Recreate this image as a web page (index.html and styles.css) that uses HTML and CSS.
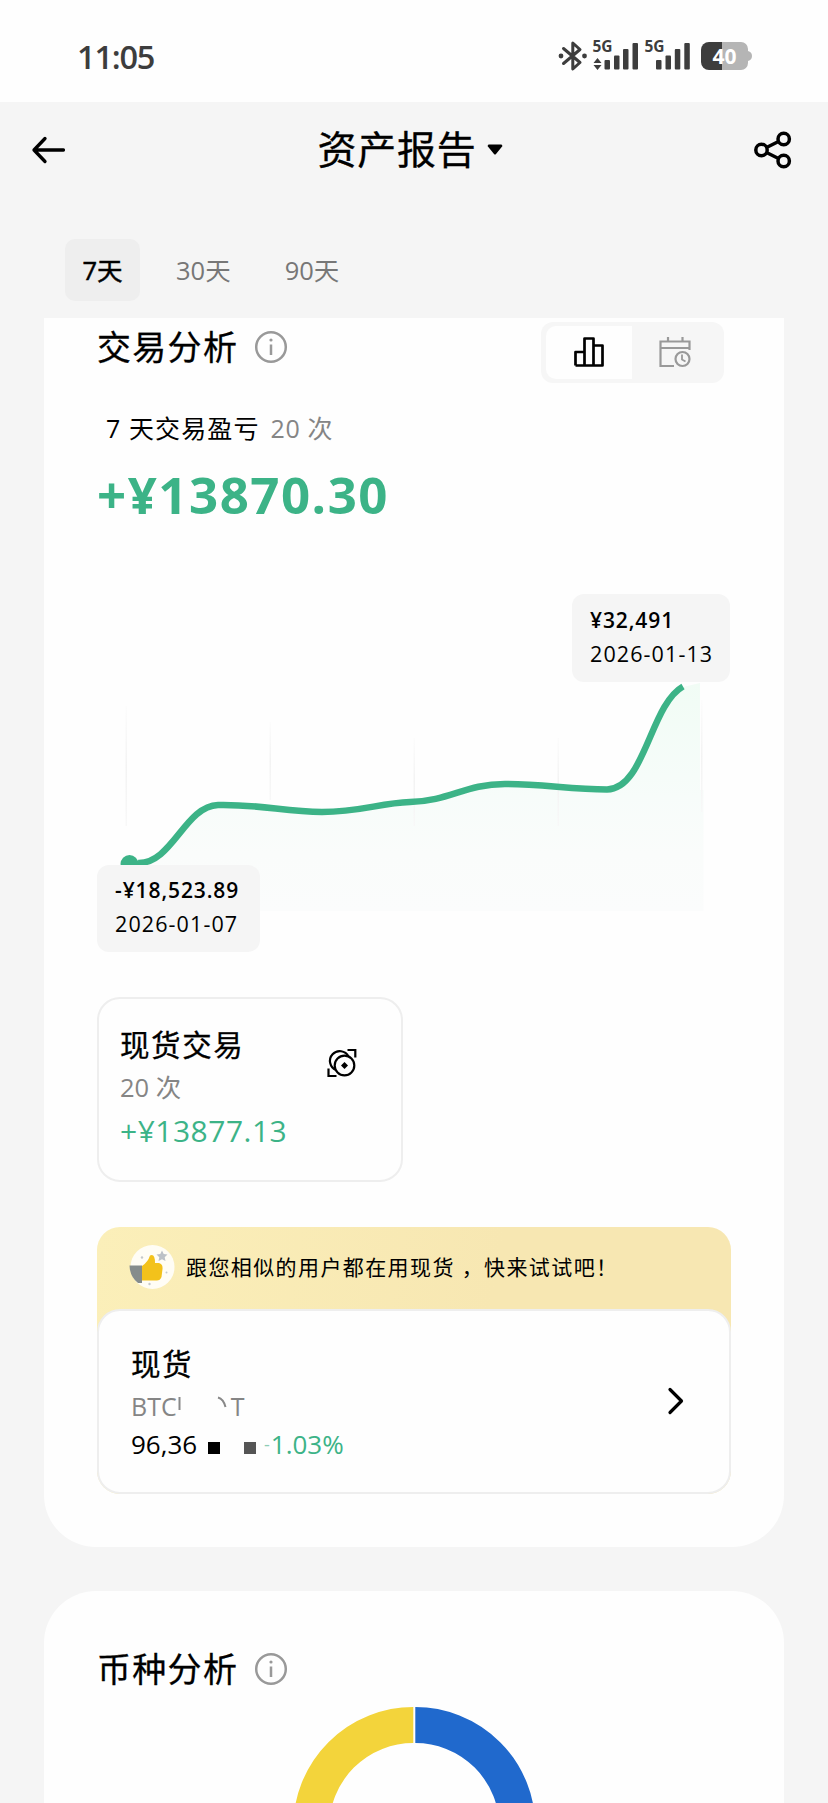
FILE: index.html
```html
<!DOCTYPE html>
<html lang="zh-CN">
<head>
<meta charset="utf-8">
<title>资产报告</title>
<link rel="stylesheet" href="styles.css">
</head>
<body>
<div class="status">
  <span class="clock">11:05</span>
  <svg class="status-icons" width="200" height="52" viewBox="0 -8 200 52">
    <path d="M11.500 10.500 L28 24.500 L20.800 31 V5 L28 11.500 L11.500 25.500" fill="none" stroke="#3d3d3d" stroke-width="3" stroke-linejoin="round" stroke-linecap="round"/>
    <g fill="#3d3d3d">
      <circle cx="9" cy="18" r="2.400"/><circle cx="32.500" cy="18" r="2.400"/>
      <text x="40.500" y="13.500" class="gen">5G</text>
      <path d="M45.500 20 L49.500 25 H41.500Z M45.500 32 L49.500 27 H41.500Z"/>
      <rect x="52.500" y="22" width="5.500" height="9.500" rx="1"/><rect x="62" y="17.500" width="5.500" height="14" rx="1"/><rect x="71" y="11" width="5.500" height="20.500" rx="1"/><rect x="80.500" y="5" width="5.500" height="26.500" rx="1"/>
      <text x="92.500" y="13.500" class="gen">5G</text>
      <rect x="104" y="22" width="5.500" height="9.500" rx="1"/><rect x="113.500" y="17.500" width="5.500" height="14" rx="1"/><rect x="122.800" y="11" width="5.500" height="20.500" rx="1"/><rect x="132.300" y="5" width="5.500" height="26.500" rx="1"/>
    </g>
    <path d="M157 4 H189 A7 7 0 0 1 196 11 V13 Q200 14 200 18 Q200 22 196 23 V25 A7 7 0 0 1 189 32 H157 Z" fill="#b5b5b5"/>
    <path d="M170 4 H157 A8 8 0 0 0 149 12 V24 A8 8 0 0 0 157 32 H170 Z" fill="#3d3d3d"/>
    <text x="172.500" y="25.500" class="charge">40</text>
  </svg>
</div>

<header class="topbar">
  <svg width="36" height="30" viewBox="0 0 36 30"><path d="M15 3.500 L4 15 L15 26.500 M4 15 H33.500" fill="none" stroke="#000" stroke-width="3.300" stroke-linecap="round" stroke-linejoin="round"/></svg>
  <div class="title"><span>资产报告</span><svg width="16" height="11" viewBox="0 0 16 11"><path d="M1.500 .5 H14.500 L15.500 2 L9 10 Q8 11 7 10 L.5 2Z"/></svg></div>
  <svg width="38" height="38" viewBox="0 0 38 38" fill="none" stroke="#000" stroke-width="3.500"><circle cx="7.500" cy="19" r="5.700"/><circle cx="29.700" cy="8" r="5.700"/><circle cx="29.700" cy="30" r="5.700"/><path d="M12.500 16.500 L24.500 10.500 M12.500 21.500 L24.500 27.500"/></svg>
</header>

<nav class="tabs">
  <span class="tab tab-on">7天</span>
  <span class="tab tab-30">30天</span>
  <span class="tab">90天</span>
</nav>

<section class="card trade">
  <div class="head">
    <h2>交易分析</h2>
    <svg class="info" width="34" height="34" viewBox="0 0 34 34"><circle cx="17" cy="17" r="14.800" fill="none" stroke="#999" stroke-width="2.500"/><circle cx="17" cy="10" r="1.600" fill="#999"/><path d="M17 14.500 V25" stroke="#999" stroke-width="2.500"/></svg>
    <div class="switch">
      <span class="switch-on"><svg width="32" height="32" viewBox="0 0 32 32" fill="none" stroke="#000" stroke-width="2.700" stroke-linejoin="round"><path d="M2.500 29.500 V16 H11.500 M11.500 29.500 V2.500 H20.500 V29.500 M20.500 9.500 H29.500 V29.500 H2.500"/></svg></span>
      <span class="switch-off"><svg width="34" height="32" viewBox="0 0 34 32" fill="none" stroke="#999" stroke-width="2.200"><path d="M31.500 14 V5.500 H2.500 V30 H16 M2.500 12 H31.500 M10 5.500 V1 M24.500 5.500 V1"/><circle cx="24.500" cy="23" r="7"/><path d="M24 18.500 V23.500 L27.500 25.500" stroke-width="1.800"/></svg></span>
    </div>
  </div>
  <div class="sub"><span>7 天交易盈亏</span><span class="muted">20 次</span></div>
  <div class="amount">+¥13870.30</div>

  <div class="chart">
    <svg width="634" height="370" viewBox="97 590 634 370">
      <defs>
        <linearGradient id="area" x1="0" y1="0" x2="0" y2="1"><stop offset="0" stop-color="#f1fcf5"/><stop offset=".5" stop-color="#f7fcfa"/><stop offset=".75" stop-color="#fafcfb"/><stop offset="1" stop-color="#fbfcfc"/></linearGradient>
        <linearGradient id="rule" x1="0" y1="0" x2="0" y2="1"><stop offset="0" stop-color="#fcfcfc"/><stop offset=".5" stop-color="#f3f3f3"/><stop offset="1" stop-color="#f8f8f8"/></linearGradient>
      </defs>
      <path d="M142 863 C172 864 185 806 218 805 C260 804 285 812 322 812 C360 812 380 803 410 802 C450 801 465 784 505 784 C540 784 570 789 607 789.500 C645 789 650 705 683 687 L700 683 V790 H703.500 V911 H142Z" fill="url(#area)"/>
      <g fill="url(#rule)"><rect x="125.500" y="706" width="1.500" height="120"/><rect x="269.500" y="722" width="1.500" height="78"/><rect x="413.500" y="738" width="1.500" height="88"/><rect x="557.500" y="738" width="1.500" height="88"/><rect x="701" y="700" width="1.500" height="112"/></g>
      <path d="M138 863 C172 864 185 806 218 805 C260 804 285 812 322 812 C360 812 380 803 410 802 C450 801 465 784 505 784 C540 784 570 789 607 789.500 C645 789 650 705 683 686.500" fill="none" stroke="#3cb387" stroke-width="6.500"/>
      <circle cx="129.500" cy="864" r="9" fill="#3cb387"/>
    </svg>
    <div class="tip tip-high"><b>¥32,491</b><span>2026-01-13</span></div>
    <div class="tip tip-low"><b>-¥18,523.89</b><span>2026-01-07</span></div>
  </div>

  <div class="spot">
    <div>
      <h3>现货交易</h3>
      <p class="muted count">20 次</p>
      <p class="gain">+¥13877.13</p>
    </div>
    <svg width="30" height="30" viewBox="0 0 30 30" fill="none" stroke="#000" stroke-width="2.200"><path d="M20.500 2 H28.300 V9.500 M1.500 20.500 V28 H9.500"/><circle cx="17.500" cy="17.500" r="9.800"/><path d="M9 22 A9.800 9.800 0 1 1 21.500 8.500"/><path d="M17.500 14 L21 17.500 L17.500 21 L14 17.500Z" fill="#000" stroke="none"/></svg>
  </div>

  <div class="promo">
    <div class="promo-top">
      <svg width="46" height="46" viewBox="0 0 46 46"><circle cx="23.500" cy="23" r="22" fill="#fffdf5"/><path d="M.5 21.500 H13 V39 H9 Q1 33 .5 21.500Z" fill="#858c8c"/><path d="M13 22 Q19 18 21 11.500 Q26 9 26 19 H30 Q34 20 33.500 25 L32.500 33 Q31 37 27 36.500 H13Z" fill="#f3c21b"/><path d="M33 6.500 L34.700 10 L38.500 10.500 L35.700 13.200 L36.500 17 L33 15.200 L29.500 17 L30.300 13.200 L27.500 10.500 L31.300 10Z" fill="#bcc1c7"/><g fill="#c5c9cb"><circle cx="13" cy="13.500" r="1.200"/><circle cx="37.500" cy="28.500" r="1"/><circle cx="20.500" cy="40" r="1.200"/></g></svg>
      <span>跟您相似的用户都在用现货 ，快来试试吧！</span>
    </div>
    <div class="pair">
      <div>
        <h3>现货</h3>
        <p class="muted symbol"><span>BTC</span><svg width="54" height="26" viewBox="0 0 54 26"><path d="M2.500 4 V17" stroke="#888" stroke-width="2"/><path d="M41 4.500 Q46.500 6 48.500 14" fill="none" stroke="#888" stroke-width="2"/></svg><span>T</span></p>
        <p class="price"><span class="num">96,36</span><i class="block"></i><i class="block block-gray"></i><span class="dash">-</span><span class="pct">1.03%</span></p>
      </div>
      <svg width="18" height="28" viewBox="0 0 18 28"><path d="M3 2.500 L14.500 14 L3 25.500" fill="none" stroke="#000" stroke-width="3.200" stroke-linecap="round" stroke-linejoin="round"/></svg>
    </div>
  </div>
</section>

<section class="card coins">
  <div class="head">
    <h2>币种分析</h2>
    <svg class="info" width="34" height="34" viewBox="0 0 34 34"><circle cx="17" cy="17" r="14.800" fill="none" stroke="#999" stroke-width="2.500"/><circle cx="17" cy="10" r="1.600" fill="#999"/><path d="M17 14.500 V25" stroke="#999" stroke-width="2.500"/></svg>
  </div>
  <svg class="donut" width="240" height="240" viewBox="0 0 240 240" fill="none" stroke-width="36"><path d="M121.300 18 A102 102 0 0 1 121.300 222" stroke="#2069cd"/><path d="M119.300 18 A102 102 0 0 0 119.300 222" stroke="#f3d43b"/></svg>
</section>
</body>
</html>
```
FILE: styles.css
```css
* { box-sizing: border-box; }
html, body { height: 1803px; overflow: hidden; }
body { margin: 0; background: #f5f5f5; color: #000; font-family: "Open Sans", "Noto Sans CJK SC", sans-serif; }
h2, h3, p { margin: 0; font-weight: 400; }
h2, h3, .title { -webkit-text-stroke: .3px #000; }
svg { display: block; flex: none; }
.muted { color: #858585; }

.status { height: 102px; background: #fefefe; display: flex; justify-content: space-between; align-items: center; padding: 10px 76px 0 77px; }
.clock { font-size: 32.5px; font-weight: 600; line-height: 40px; color: #3d3d3d; letter-spacing: -1.2px; padding-top: 2px; }
.gen { font: 700 15.5px "Open Sans", sans-serif; }
.charge { font: 700 21px "Open Sans", sans-serif; fill: #fff; text-anchor: middle; }

.topbar { height: 96px; display: flex; align-items: center; justify-content: space-between; padding: 0 36px 0 30px; }
.title { display: flex; align-items: center; gap: 10px; font-size: 39px; line-height: 56px; letter-spacing: .8px; padding-bottom: 2px; }

.tabs { height: 120px; display: flex; padding: 41px 0 0 65px; font-size: 25.5px; line-height: 62px; color: #777; }
.tab-on { width: 75px; height: 62px; text-align: center; border-radius: 10px; background: #eee; color: #000; -webkit-text-stroke: .5px #000; }
.tab-30 { margin: 0 54px 0 36px; }

.card { margin: 0 44px; background: #fefefe; padding: 0 53px; }
.trade { height: 1229px; border-radius: 0 0 52px 52px; }
.head { display: flex; align-items: center; }
.head h2 { font-size: 34px; line-height: 50px; letter-spacing: 1.3px; }
.head .info { margin-left: 16px; }
.trade .head { height: 66px; }
.trade .head h2, .trade .info { margin-bottom: 9px; }
.switch { margin: 2px 7px 0 auto; width: 183px; height: 61px; padding: 4px 5px; border-radius: 12px; background: #f6f6f6; display: flex; }
.switch-on, .switch-off { display: flex; align-items: center; justify-content: center; }
.switch-on { width: 86px; border-radius: 10px 0 0 10px; background: #fefefe; }
.switch-off { width: 88px; }

.sub { margin-top: 24px; height: 40px; padding-left: 9px; display: flex; gap: 11px; font-size: 25px; line-height: 40px; letter-spacing: 1.1px; }
.sub .muted { letter-spacing: .6px; }
.amount { margin-top: 17px; height: 62px; font-size: 51px; font-weight: 700; line-height: 58px; color: #3cb387; letter-spacing: 1.5px; }

.chart { position: relative; margin-top: 63px; height: 370px; }
.tip { position: absolute; display: flex; flex-direction: column; border-radius: 12px; background: #f5f5f5; font-size: 21.5px; line-height: 33px; letter-spacing: 1.1px; white-space: nowrap; }
.tip b { font-size: 21px; font-weight: 600; letter-spacing: .9px; }
.tip-high { left: 475px; top: 4px; width: 158px; height: 88px; padding: 10px 0 0 18px; }
.tip-low { left: 0; top: 275px; width: 163px; height: 87px; padding: 9px 0 0 18px; }

.spot { margin-top: 37px; width: 306px; height: 185px; border: 2px solid #eee; border-radius: 23px; padding: 23px 44px 0 21px; display: flex; justify-content: space-between; }
.spot svg { margin-top: 26px; }
h3 { font-size: 29.5px; line-height: 46px; letter-spacing: 1.6px; }
.count { font-size: 25.5px; line-height: 38px; }
.gain { font-size: 30px; line-height: 50px; font-weight: 500; color: #3cb387; letter-spacing: .5px; }

.promo { margin-top: 45px; width: 634px; height: 267px; border-radius: 23px; background: linear-gradient(100deg, #fbefb9, #f7e7b2 60%); }
.promo-top { height: 82px; display: flex; align-items: center; gap: 11px; padding: 0 0 2px 32px; font-size: 21px; letter-spacing: 1.4px; line-height: 34px; white-space: nowrap; }
.pair { height: 185px; border: 2px solid #eee; border-radius: 23px; background: #fefefe; display: flex; justify-content: space-between; padding: 30px 44px 0 32px; }
.pair > svg { margin-top: 46px; }
.symbol { display: flex; align-items: center; height: 38px; font-size: 25px; line-height: 38px; }
.price { display: flex; align-items: center; height: 38px; font-size: 26px; line-height: 38px; white-space: nowrap; }
.num { width: 77px; }
.block { width: 12px; height: 12px; margin-top: 8px; background: #000; }
.block-gray { margin-left: 24px; background: #555; }
.dash { margin-left: 8px; font-size: 18px; color: #8dcdb5; }
.pct { margin-left: 1px; color: #3cb387; }

.coins { margin-top: 44px; height: 212px; border-radius: 52px 52px 0 0; padding-top: 53px; overflow: hidden; }
.donut { margin: 13px auto 0; }
```
